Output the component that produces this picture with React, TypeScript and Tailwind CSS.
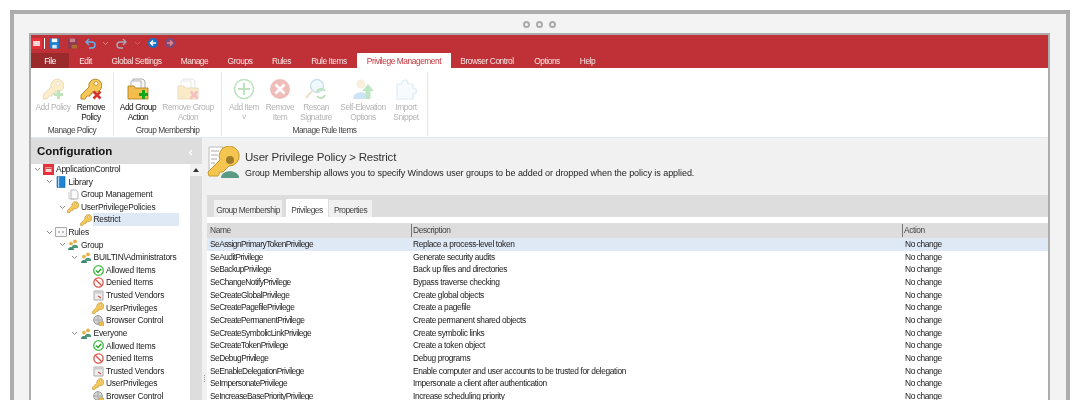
import React from "react";

const rows: [string, string][] = [
  ["SeAssignPrimaryTokenPrivilege", "Replace a process-level token"],
  ["SeAuditPrivilege", "Generate security audits"],
  ["SeBackupPrivilege", "Back up files and directories"],
  ["SeChangeNotifyPrivilege", "Bypass traverse checking"],
  ["SeCreateGlobalPrivilege", "Create global objects"],
  ["SeCreatePagefilePrivilege", "Create a pagefile"],
  ["SeCreatePermanentPrivilege", "Create permanent shared objects"],
  ["SeCreateSymbolicLinkPrivilege", "Create symbolic links"],
  ["SeCreateTokenPrivilege", "Create a token object"],
  ["SeDebugPrivilege", "Debug programs"],
  ["SeEnableDelegationPrivilege", "Enable computer and user accounts to be trusted for delegation"],
  ["SeImpersonatePrivilege", "Impersonate a client after authentication"],
  ["SeIncreaseBasePriorityPrivilege", "Increase scheduling priority"],
];

const Key = ({ size = 22, stroke = "#b8862a" }: { size?: number; stroke?: string }) => (
  <svg width={size} height={size} viewBox="0 0 22 22">
    <path d="M1 17 L9 9 A6.5 6.5 0 1 1 14 14 L12 14 L12 16 L10 16 L10 18 L7 18 L5 21 L1 21 Z" fill="#f6c956" stroke={stroke} strokeWidth="1" strokeLinejoin="round" />
    <circle cx="16" cy="5.5" r="1.9" fill="#fff" stroke={stroke} strokeWidth="0.8" />
  </svg>
);

const Plus = ({ c = "#2faa2f" }: { c?: string }) => (
  <svg width="11" height="11" viewBox="0 0 11 11" className="absolute right-0 bottom-0">
    <path d="M5.5 1v9M1 5.5h9" stroke={c} strokeWidth="3" />
  </svg>
);
const Cross = ({ c = "#d8322c" }: { c?: string }) => (
  <svg width="10" height="10" viewBox="0 0 10 10" className="absolute right-0 bottom-0">
    <path d="M1.5 1.5l7 7M8.5 1.5l-7 7" stroke={c} strokeWidth="2.6" />
  </svg>
);

const Folder = () => (
  <svg width="22" height="22" viewBox="0 0 22 22">
    <path d="M6 1h10l2 2v8H6z" fill="#f4f4f4" stroke="#9a9a9a" strokeWidth="0.8" />
    <path d="M4 3h10v8H4z" fill="#fafafa" stroke="#a8a8a8" strokeWidth="0.8" />
    <path d="M1 8h6l1.5 2H21v11H1z" fill="#f2bd4a" stroke="#a97a1d" strokeWidth="0.8" />
  </svg>
);

const Btn = ({ icon, lines, off, w }: { icon: React.ReactNode; lines: string[]; off?: boolean; w: string }) => (
  <div className={`flex flex-col items-center shrink-0 ${w}`}>
    <div className={`relative w-[22px] h-[22px] mt-[6px] ${off ? "opacity-30" : ""}`}>{icon}</div>
    <div className={`mt-[3px] text-center leading-[9.5px] text-[8.4px] tracking-[-0.45px] ${off ? "text-[#b4b4b4]" : "text-[#111]"}`}>
      {lines.map((l) => (
        <div key={l} className="whitespace-nowrap">{l}</div>
      ))}
    </div>
  </div>
);

const Group = ({ label, w, children }: { label: string; w: string; children: React.ReactNode }) => (
  <div className={`relative flex shrink-0 border-r border-[#dfe8f2] mt-[4px] h-[64px] ${w}`}>
    {children}
    <div className="absolute bottom-[1px] inset-x-0 text-center text-[8.4px] tracking-[-0.5px] leading-[10px] text-[#444]">{label}</div>
  </div>
);

const Check = () => (
  <svg width="11" height="11" viewBox="0 0 11 11"><circle cx="5.5" cy="5.5" r="4.8" fill="#fff" stroke="#3dbb3d" strokeWidth="1.3" /><path d="M3 5.5l2 2 3.2-3.6" fill="none" stroke="#2ea62e" strokeWidth="1.5" /></svg>
);
const Deny = () => (
  <svg width="11" height="11" viewBox="0 0 11 11"><circle cx="5.5" cy="5.5" r="4.6" fill="#fff" stroke="#d9534a" strokeWidth="1.3" /><path d="M2.3 2.3l6.4 6.4" stroke="#d9534a" strokeWidth="1.3" /></svg>
);
const Vendor = () => (
  <svg width="11" height="11" viewBox="0 0 11 11"><path d="M1 1h9v9H1z" fill="#eee" stroke="#aaa" /><path d="M1 1h9v2.5H1z" fill="#ccc" /><path d="M5 6l3 2" stroke="#c9504a" strokeWidth="1.2" /></svg>
);
const Globe = () => (
  <svg width="11" height="11" viewBox="0 0 11 11"><circle cx="5" cy="5" r="4.4" fill="#d5d5d5" stroke="#888" strokeWidth="0.8" /><path d="M1 5h8M5 1v8" stroke="#999" strokeWidth="0.6" /><path d="M6 7h5v3.5H6z" fill="#f0c14f" stroke="#a97a1d" strokeWidth="0.4" /></svg>
);
const People = () => (
  <svg width="12" height="11" viewBox="0 0 12 11"><circle cx="8" cy="2.4" r="1.9" fill="#eab14a" /><path d="M5 8c0-3 6-3 6 0v1H5z" fill="#4b9a7a" /><circle cx="4" cy="4.6" r="1.9" fill="#eab14a" /><path d="M1 11c0-4 6-4 6 0z" fill="#3f8a6e" /></svg>
);
const Doc = () => (
  <svg width="11" height="11" viewBox="0 0 11 11"><path d="M3 1h5l2 2v7H3z" fill="#fafafa" stroke="#aaa" strokeWidth="0.8" /><path d="M1 3v7h6" fill="none" stroke="#bbb" strokeWidth="0.8" /></svg>
);
const Book = () => (
  <svg width="10" height="12" viewBox="0 0 10 12"><path d="M1 0.5h8v11H1z" fill="#1f84d4" stroke="#15629e" strokeWidth="0.6" /><path d="M2.6 0.5v11" stroke="#bfe0f7" /></svg>
);
const AppI = () => (
  <svg width="11" height="11" viewBox="0 0 11 11"><path d="M0 0h11v11H0z" fill="#e8303a" /><path d="M2.5 3h6v5h-6z" fill="#f8d6d6" /><path d="M2.5 4.2h6" stroke="#b01c22" /></svg>
);
const RulesI = () => (
  <svg width="12" height="10" viewBox="0 0 12 10"><path d="M.5.5h11v9H.5z" fill="#f7f7f7" stroke="#aaa" /><path d="M3 5h2M7 5h2" stroke="#888" /></svg>
);
const SmallKey = () => <Key size={12} />;

type T = { l: 0 | 1 | 2 | 3 | 4; t: string; i: React.ReactNode; open?: boolean; sel?: boolean };
const tree: T[] = [
  { l: 0, t: "ApplicationControl", i: <AppI />, open: true },
  { l: 1, t: "Library", i: <Book />, open: true },
  { l: 2, t: "Group Management", i: <Doc /> },
  { l: 2, t: "UserPrivilegePolicies", i: <SmallKey />, open: true },
  { l: 3, t: "Restrict", i: <SmallKey />, sel: true },
  { l: 1, t: "Rules", i: <RulesI />, open: true },
  { l: 2, t: "Group", i: <People />, open: true },
  { l: 3, t: "BUILTIN\\Administrators", i: <People />, open: true },
  { l: 4, t: "Allowed Items", i: <Check /> },
  { l: 4, t: "Denied Items", i: <Deny /> },
  { l: 4, t: "Trusted Vendors", i: <Vendor /> },
  { l: 4, t: "UserPrivileges", i: <SmallKey /> },
  { l: 4, t: "Browser Control", i: <Globe /> },
  { l: 3, t: "Everyone", i: <People />, open: true },
  { l: 4, t: "Allowed Items", i: <Check /> },
  { l: 4, t: "Denied Items", i: <Deny /> },
  { l: 4, t: "Trusted Vendors", i: <Vendor /> },
  { l: 4, t: "UserPrivileges", i: <SmallKey /> },
  { l: 4, t: "Browser Control", i: <Globe /> },
];
const indent = ["pl-[2px]", "pl-[14.5px]", "pl-[27px]", "pl-[39.5px]", "pl-[52px]"];

const Chev = ({ c = "#888" }: { c?: string }) => (
  <svg width="7" height="5" viewBox="0 0 7 5"><path d="M1 1l2.5 2.5L6 1" fill="none" stroke={c} strokeWidth="1" /></svg>
);

const tabs: [string, string][] = [
  ["Edit", "w-[33px]"], ["Global Settings", "w-[69px]"], ["Manage", "w-[47px]"], ["Groups", "w-[44px]"], ["Rules", "w-[39px]"], ["Rule Items", "w-[56px]"],
];

export default function App() {
  return (
    <div className="w-[1080px] h-[400px] overflow-hidden bg-white pt-[10px] px-[10px] text-[#1a1a1a] font-['Liberation_Sans',sans-serif] blur-[0.25px]">
      <div className="h-[390px] border-[4px] border-b-0 border-[#adadad] bg-[#f3f3f3] flex flex-col">
        <div className="h-[19px] shrink-0 flex items-center justify-center gap-[6px] pt-[2px] pr-[2px]">
          <i className="w-[7px] h-[7px] rounded-full border-2 border-[#aaa]" />
          <i className="w-[7px] h-[7px] rounded-full border-2 border-[#aaa]" />
          <i className="w-[7px] h-[7px] rounded-full border-2 border-[#aaa]" />
        </div>
        <div className="flex-1 min-h-0 ml-[15px] mr-[16px] border-[2px] border-b-0 border-[#adadad] flex flex-col overflow-hidden bg-[#f1f1f1]">
          {/* title bar */}
          <div className="h-[18px] shrink-0 bg-[#bf3136] flex items-center pb-[2px]">
            <svg width="11" height="11" viewBox="0 0 11 11"><path d="M0 0h11v11H0z" fill="#e8303a" /><path d="M2 3h7v5H2z" fill="#f8d6d6" /></svg>
            <div className="w-[1px] h-[11px] bg-white ml-[2px]" />
            <svg className="ml-[5px]" width="9" height="11" viewBox="0 0 10 11"><path d="M0 0h10v11H0z" fill="#1c7fd0" /><path d="M2 0h6v4H2z" fill="#fff" /><path d="M2.5 7h5v4h-5z" fill="#cfe4f6" /></svg>
            <svg className="ml-[9px] opacity-70" width="9" height="11" viewBox="0 0 10 11"><path d="M0 0h10v11H0z" fill="#7e3a58" /><path d="M2 0h6v4H2z" fill="#c9a4ae" /><path d="M4 7h6v4H4z" fill="#a5862f" /></svg>
            <svg className="ml-[8px]" width="11" height="11" viewBox="0 0 11 11"><path d="M1 4h6a3 3 0 0 1 0 6H4" fill="none" stroke="#5fb4ee" strokeWidth="1.4" /><path d="M4 1L1 4l3 3" fill="none" stroke="#5fb4ee" strokeWidth="1.4" /></svg>
            <span className="ml-[6px]"><Chev c="#d88" /></span>
            <svg className="ml-[7px]" width="11" height="11" viewBox="0 0 11 11"><path d="M10 4H4a3 3 0 0 0 0 6h3" fill="none" stroke="#a9a9b5" strokeWidth="1.4" /><path d="M7 1l3 3-3 3" fill="none" stroke="#a9a9b5" strokeWidth="1.4" /></svg>
            <span className="ml-[7px] opacity-50"><Chev c="#d88" /></span>
            <svg className="ml-[7px]" width="10" height="10" viewBox="0 0 10 10"><circle cx="5" cy="5" r="5" fill="#1672c9" /><path d="M8 5H3M5 2.5L2.5 5 5 7.5" fill="none" stroke="#fff" strokeWidth="1.5" /></svg>
            <svg className="ml-[7px]" width="10" height="10" viewBox="0 0 10 10"><circle cx="5" cy="5" r="5" fill="#7a4a78" /><path d="M2 5h5M5 2.5L7.5 5 5 7.5" fill="none" stroke="#e88" strokeWidth="1.5" /></svg>
          </div>
          {/* tabs */}
          <div className="h-[15px] shrink-0 bg-[#bf3136] flex text-[8.4px] tracking-[-0.45px] text-[#f8e4e4] leading-[17px] whitespace-nowrap text-center">
            <div className="w-[38px] bg-[#9b2a2d] text-white">File</div>
            {tabs.map(([t, m]) => (
              <div key={t} className={m}>{t}</div>
            ))}
            <div className="w-[94px] bg-white text-[#c4343a]">Privilege Management</div>
            <div className="w-[72px]">Browser Control</div>
            <div className="w-[48px]">Options</div>
            <div className="w-[33px]">Help</div>
          </div>
          {/* ribbon */}
          <div className="h-[70px] shrink-0 bg-white border-b border-[#e3e8ef] flex">
            <Group label="Manage Policy" w="w-[83px]">
              <Btn w="w-[44px]" off lines={["Add Policy"]} icon={<><Key /><Plus /></>} />
              <Btn w="w-[32px]" lines={["Remove", "Policy"]} icon={<><Key /><Cross /></>} />
            </Group>
            <Group label="Group Membership" w="w-[108px]">
              <Btn w="w-[48px]" lines={["Add Group", "Action"]} icon={<><Folder /><Plus c="#16a51c" /></>} />
              <Btn w="w-[52px]" off lines={["Remove Group", "Action"]} icon={<><Folder /><Cross /></>} />
            </Group>
            <Group label="Manage Rule Items" w="w-[206px]">
              <div className="w-[4px]" />
              <Btn w="w-[36px]" off lines={["Add Item", "˅"]} icon={<svg width="22" height="22" viewBox="0 0 22 22"><circle cx="11" cy="11" r="9.5" fill="none" stroke="#28a528" strokeWidth="1.6" /><path d="M11 5v12M5 11h12" stroke="#28a528" strokeWidth="2.2" /></svg>} />
              <Btn w="w-[36px]" off lines={["Remove", "Item"]} icon={<svg width="22" height="22" viewBox="0 0 22 22"><circle cx="11" cy="11" r="10" fill="#c9291e" /><path d="M6.5 6.5l9 9M15.5 6.5l-9 9" stroke="#fff" strokeWidth="2.6" /></svg>} />
              <Btn w="w-[36px]" off lines={["Rescan", "Signature"]} icon={<svg width="22" height="22" viewBox="0 0 22 22"><circle cx="12" cy="8" r="6.5" fill="#cfe9f8" stroke="#4e9cc7" strokeWidth="1.4" /><path d="M7 13l-6 7" stroke="#c9a055" strokeWidth="2.2" /><path d="M12 14a4.5 4.5 0 0 1 8 -1M20 17a4.5 4.5 0 0 1-8 1" fill="none" stroke="#22a52c" strokeWidth="2" /></svg>} />
              <Btn w="w-[58px]" off lines={["Self-Elevation", "Options"]} icon={<svg width="22" height="22" viewBox="0 0 22 22"><circle cx="9" cy="6" r="4.5" fill="#f0c98f" /><path d="M1 21c0-9 15-9 15 0z" fill="#5ea9e6" /><path d="M16 6l6 7h-3.5v8h-5v-8H10z" fill="#27b23a" /></svg>} />
              <Btn w="w-[28px]" off lines={["Import", "Snippet"]} icon={<svg width="22" height="22" viewBox="0 0 22 22"><path d="M2 6h5v-1a3 3 0 1 1 6 0v1h5v4h.5a3 3 0 1 1 0 6H18v5H2z" fill="#e8f3fc" stroke="#8dbde6" strokeWidth="1.2" /></svg>} />
            </Group>
          </div>
          {/* body */}
          <div className="flex-1 min-h-0 flex">
            <div className="w-[171px] shrink-0 flex flex-col">
              <div className="h-[26px] shrink-0 bg-[#dddddd] flex items-center justify-between pl-[6px] pr-[9px] pt-[2px]">
                <span className="font-bold text-[11.5px] text-[#111]">Configuration</span>
                <svg width="5" height="7" viewBox="0 0 5 7"><path d="M4 1L1.5 3.5 4 6" fill="none" stroke="#fff" strokeWidth="1.2" /></svg>
              </div>
              <div className="flex-1 min-h-0 flex">
                <div className="w-[159px] bg-white text-[8.4px] tracking-[-0.2px] overflow-hidden">
                  <div className="-mt-[1px]">
                    {tree.map((n, i) => (
                      <div key={i} className={`h-[12.62px] flex items-center gap-[1px] whitespace-nowrap ${indent[n.l]}`}>
                        <span className="w-[8px] flex justify-center shrink-0">{n.open && <Chev />}</span>
                        <span className="w-[12px] flex justify-center shrink-0">{n.i}</span>
                        <span className={`h-full pl-[1px] flex items-center flex-1 ${n.sel ? "bg-[#dfe9f6] mr-[11px]" : ""}`}>{n.t}</span>
                      </div>
                    ))}
                  </div>
                </div>
                <div className="w-[12px] bg-[#dddddd]">
                  <div className="h-[12px] bg-[#f1f1f1] flex items-center justify-center">
                    <svg width="6" height="4" viewBox="0 0 6 4"><path d="M3 0l3 4H0z" fill="#333" /></svg>
                  </div>
                </div>
              </div>
            </div>
            <div className="w-[5px] shrink-0 flex items-end justify-center pb-[18px]">
              <div className="flex flex-col gap-[1px]">
                <i className="w-[1px] h-[1px] bg-[#999]" /><i className="w-[1px] h-[1px] bg-[#999]" /><i className="w-[1px] h-[1px] bg-[#999]" /><i className="w-[1px] h-[1px] bg-[#999]" />
              </div>
            </div>
            <div className="flex-1 min-w-0 flex flex-col">
              <div className="h-[57px] shrink-0 flex items-start pt-[11px]">
                <div className="w-[38px] shrink-0 -mt-[3px]"><svg width="34" height="32" viewBox="0 0 34 32"><path d="M2 1h14v24H2z" fill="#fff" stroke="#bbb" /><path d="M4 5h8M4 9h7M4 13h6M4 17h4" stroke="#aaa" /><path d="M1 26L13 14a10 10 0 1 1 9 6l-6 6-3 0-2 4H2z" fill="#f5c64f" stroke="#c9992b" /><circle cx="23" cy="14" r="4" fill="#a07c2b" /><path d="M14 32c0-9 18-9 18 0z" fill="#5a9a82" /></svg></div>
                <div>
                  <div className="text-[11.5px] tracking-[-0.2px] leading-[16px] text-[#333]">User Privilege Policy &gt; Restrict</div>
                  <div className="mt-[2px] text-[9px] tracking-[-0.05px] leading-[12px] text-[#222]">Group Membership allows you to specify Windows user groups to be added or dropped when the policy is applied.</div>
                </div>
              </div>
              <div className="h-[22px] shrink-0 bg-[#dddddd] flex items-end pl-[7px] text-[8.4px] tracking-[-0.5px] text-[#444] leading-[14px] whitespace-nowrap">
                <div className="w-[68px] h-[17px] bg-[#f0f0f0] text-center pt-[3px]">Group Membership</div>
                <div className="ml-[4px] w-[42px] h-[18px] bg-white text-center pt-[4px]">Privileges</div>
                <div className="ml-[1px] w-[43px] h-[17px] bg-[#f0f0f0] text-center pt-[3px]">Properties</div>
              </div>
              <div className="h-[6px] shrink-0 bg-white" />
              <div className="h-[15px] shrink-0 bg-[#dddddd] grid grid-cols-[201px_491px_1fr] items-center text-[8.4px] tracking-[-0.4px] text-[#444] pl-[3px]">
                <div>Name</div>
                <div className="flex"><span className="border-l border-[#777] pl-[1px]">Description</span></div>
                <div className="flex"><span className="border-l border-[#777] pl-[1px]">Action</span></div>
              </div>
              <div className="flex-1 min-h-0 bg-white overflow-hidden text-[8.4px]">
                {rows.map(([a, b], i) => (
                  <div key={a} className={`h-[12.67px] grid grid-cols-[201px_491px_1fr] items-center pl-[3px] ${i === 0 ? "bg-[#dfe9f6]" : ""}`}>
                    <div className="tracking-[-0.54px]">{a}</div>
                    <div className="pl-[2px] tracking-[-0.37px]">{b}</div>
                    <div className="pl-[3px] tracking-[-0.42px]">No change</div>
                  </div>
                ))}
              </div>
            </div>
          </div>
        </div>
      </div>
    </div>
  );
}
